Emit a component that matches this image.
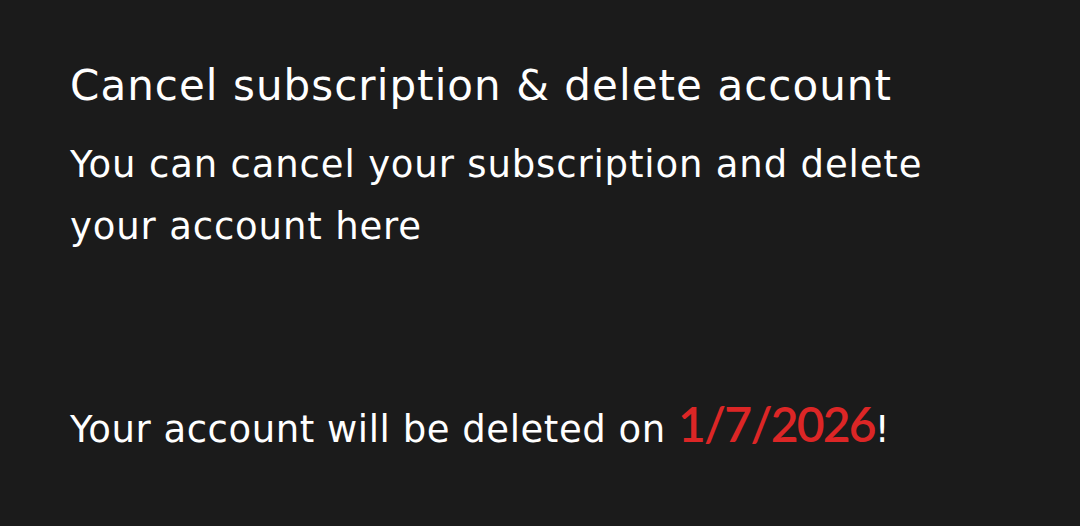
import React from "react";

export default function App() {
  return (
    <div
      className="h-[526px] w-full bg-[#1b1b1b] px-[70px] pt-[62px] text-white"
      style={{ fontFamily: '"DejaVu Sans", "Noto Sans", sans-serif' }}
    >
      <h1 className="text-[42px] leading-[48px] font-normal tracking-[1.05px] whitespace-nowrap">
        Cancel subscription &amp; delete account
      </h1>
      <p className="mt-[24px] w-[900px] text-[37px] leading-[62px] tracking-[0.85px]">
        You can cancel your subscription and delete your account here
      </p>
      <p className="mt-[141px] text-[37px] leading-[62px] tracking-[0.55px] whitespace-nowrap">
        Your account will be deleted on{" "}
        <span
          className="text-[48px] leading-none font-semibold tracking-[-1.8px] text-[#dc2626]"
          style={{ fontFamily: 'Lato, "Noto Sans", sans-serif' }}
        >
          1/7/2026
        </span>
        !
      </p>
    </div>
  );
}
